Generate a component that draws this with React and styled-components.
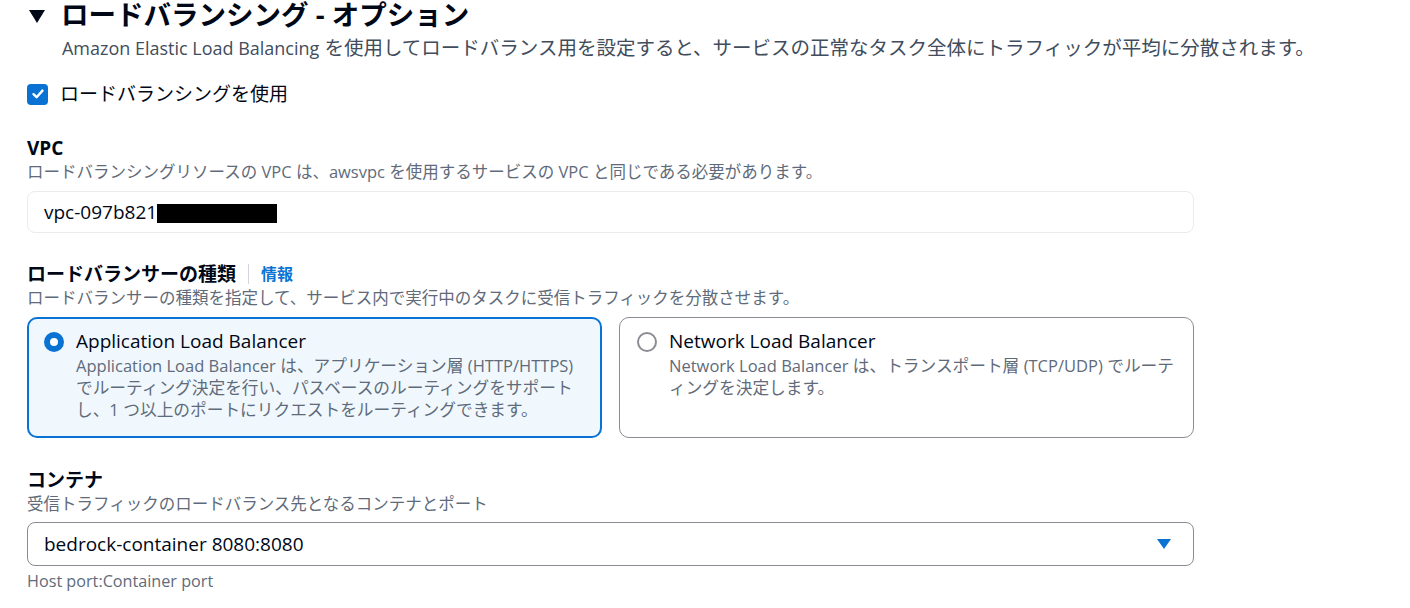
import styled, { createGlobalStyle } from "styled-components";

const GlobalStyle = createGlobalStyle`
  html, body {
    margin: 0;
    padding: 0;
    background: #ffffff;
  }
  body {
    font-family: "Open Sans", "Noto Sans CJK JP", sans-serif;
    color: #000716;
  }
`;

const Page = styled.div`
  width: 1410px;
  height: 608px;
  overflow: hidden;
  padding-left: 27px;
  box-sizing: border-box;
`;

const Header = styled.div`
  display: flex;
  align-items: center;
  gap: 16px;
  height: 30px;
  padding-left: 2px;
`;

const Caret = styled.span`
  width: 0;
  height: 0;
  border-left: 8.5px solid transparent;
  border-right: 8.5px solid transparent;
  border-top: 13px solid #000716;
  margin-top: 2px;
`;

const Title = styled.h2`
  margin: 0;
  font-size: 27.5px;
  font-weight: 700;
  line-height: 30px;
  color: #000716;
`;

const En = styled.span`
  font-size: ${(p) => p.$size || "0.923em"};
`;

const Lead = styled.p`
  margin: 7px 0 0 35px;
  font-size: 19.5px;
  line-height: 22px;
  color: #414d5c;
`;

const CheckRow = styled.label`
  display: flex;
  align-items: center;
  gap: 12px;
  margin-top: 24px;
  font-size: 19px;
  line-height: 22px;
  color: #000716;
`;

const CheckBox = styled.span`
  width: 21px;
  height: 21px;
  border-radius: 4px;
  background: #0972d3;
  display: flex;
  align-items: center;
  justify-content: center;
`;

const Field = styled.div`
  width: 1167px;
  margin-top: ${(p) => p.$top}px;
`;

const Label = styled.div`
  display: flex;
  align-items: center;
  font-size: 19px;
  font-weight: 700;
  line-height: 22px;
  color: #000716;
`;

const InfoLink = styled.a`
  font-size: 16px;
  font-weight: 700;
  color: #0972d3;
  text-decoration: none;
  padding-left: 12px;
  margin-left: 12px;
  border-left: 1px solid #d1d5db;
  line-height: 20px;
`;

const Desc = styled.div`
  margin-top: 2px;
  font-size: 16.5px;
  line-height: 22px;
  color: #5f6b7a;
`;

const Input = styled.div`
  margin-top: ${(p) => p.$gap}px;
  height: ${(p) => p.$h}px;
  box-sizing: border-box;
  border: 1px solid ${(p) => (p.$disabled ? "#e9ebed" : "#8c8c94")};
  border-radius: 8px;
  display: flex;
  align-items: center;
  justify-content: space-between;
  padding: 0 22px 0 16px;
  font-size: 19px;
  color: #000716;
`;

const Redact = styled.span`
  display: inline-block;
  width: 120px;
  height: 19px;
  background: #000;
  vertical-align: middle;
`;

const Tiles = styled.div`
  margin-top: 8px;
  display: grid;
  grid-template-columns: 1fr 1fr;
  gap: 17px;
`;

const Tile = styled.div`
  box-sizing: border-box;
  height: 121px;
  border-radius: 10px;
  border: ${(p) => (p.$selected ? "2px solid #0972d3" : "1px solid #8c8c94")};
  background: ${(p) => (p.$selected ? "#f0f8fe" : "#ffffff")};
  padding: ${(p) => (p.$selected ? "11px 6px 0 15px" : "12px 6px 0 17px")};
  display: flex;
  gap: 12px;
`;

const Radio = styled.span`
  flex: none;
  width: 20px;
  height: 20px;
  margin-top: 2px;
  border-radius: 50%;
  box-sizing: border-box;
  border: ${(p) => (p.$on ? "6px solid #0972d3" : "2px solid #8c8c94")};
  background: #fff;
`;

const TileBody = styled.div`
  flex: 1;
  min-width: 0;
  display: flex;
  flex-direction: column;
`;

const TileTitle = styled.div`
  font-size: 19px;
  line-height: 22px;
  color: #000716;
`;

const TileDesc = styled.div`
  margin-top: 3px;
  font-size: 16.7px;
  line-height: 22px;
  color: #5f6b7a;
  white-space: nowrap;
`;

const Hint = styled.div`
  margin-top: 5px;
  font-size: 16.2px;
  line-height: 20px;
  color: #5f6b7a;
`;

function App() {
  return (
    <Page>
      <GlobalStyle />
      <Header>
        <Caret />
        <Title>ロードバランシング - オプション</Title>
      </Header>
      <Lead>
        <En>Amazon Elastic Load Balancing</En>{" "}
        を使用してロードバランス用を設定すると、サービスの正常なタスク全体にトラフィックが平均に分散されます。
      </Lead>
      <CheckRow>
        <CheckBox>
          <svg width="14" height="14" viewBox="0 0 14 14">
            <path d="M2.5 7.2 L5.6 10.2 L11.5 3.6" fill="none" stroke="#fff" strokeWidth="2.4" strokeLinecap="round" strokeLinejoin="round" />
          </svg>
        </CheckBox>
        ロードバランシングを使用
      </CheckRow>

      <Field $top={32}>
        <Label>VPC</Label>
        <Desc>ロードバランシングリソースの VPC は、awsvpc を使用するサービスの VPC と同じである必要があります。</Desc>
        <Input $gap={8} $h={42} $disabled>
          <span>
            vpc-097b821<Redact />
          </span>
        </Input>
      </Field>

      <Field $top={30}>
        <Label>
          ロードバランサーの種類
          <InfoLink href="#">情報</InfoLink>
        </Label>
        <Desc>ロードバランサーの種類を指定して、サービス内で実行中のタスクに受信トラフィックを分散させます。</Desc>
        <Tiles>
          <Tile $selected>
            <Radio $on />
            <TileBody>
              <TileTitle>Application Load Balancer</TileTitle>
              <TileDesc>
                <En $size="0.99em">Application Load Balancer</En> は、アプリケーション層 <En $size="0.99em">(HTTP/HTTPS)</En>
                <br />
                でルーティング決定を行い、パスベースのルーティングをサポート
                <br />
                し、1 つ以上のポートにリクエストをルーティングできます。
              </TileDesc>
            </TileBody>
          </Tile>
          <Tile>
            <Radio />
            <TileBody>
              <TileTitle>Network Load Balancer</TileTitle>
              <TileDesc>
                <En $size="0.99em">Network Load Balancer</En> は、トランスポート層 <En $size="0.99em">(TCP/UDP)</En> でルーテ
                <br />
                ィングを決定します。
              </TileDesc>
            </TileBody>
          </Tile>
        </Tiles>
      </Field>

      <Field $top={31}>
        <Label>コンテナ</Label>
        <Desc>受信トラフィックのロードバランス先となるコンテナとポート</Desc>
        <Input $gap={7} $h={44}>
          <span>bedrock-container 8080:8080</span>
          <svg width="14" height="10" viewBox="0 0 14 10">
            <path d="M0 0 H14 L7 10 Z" fill="#0972d3" />
          </svg>
        </Input>
        <Hint>Host port:Container port</Hint>
      </Field>
    </Page>
  );
}

export default App;
